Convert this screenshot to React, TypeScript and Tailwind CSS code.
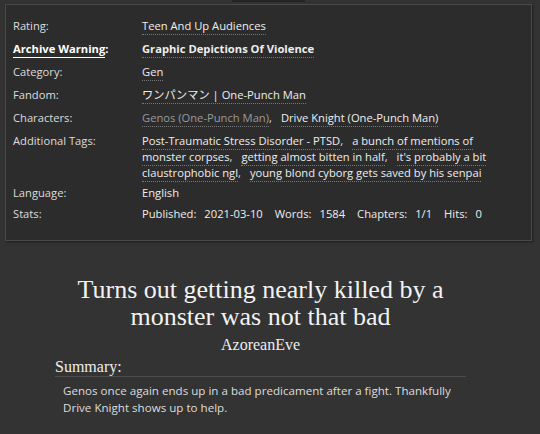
import type { ReactNode } from 'react';

const sans = "font-['Open_Sans','Noto_Sans_CJK_JP',sans-serif]";
const serif = "font-['Liberation_Serif',serif]";

function Tag({ children, muted = false }: { children: ReactNode; muted?: boolean }) {
  return (
    <span
      className={`border-b border-dotted border-[#777] pb-[1px] ${muted ? 'text-[#9a9a9a]' : 'text-[#eeeeee]'}`}
    >
      {children}
    </span>
  );
}

function Comma() {
  return <span className="mr-[9px] text-[#dddddd]">,</span>;
}

function Stat({ label, value }: { label: string; value: string }) {
  return (
    <span className="mr-[12px] inline-flex gap-[8px]">
      <span>{label}:</span>
      <span>{value}</span>
    </span>
  );
}

export default function App() {
  return (
    <div className={`min-h-[434px] w-[540px] bg-[#333333] ${sans} text-[11.2px] text-[#dddddd]`}>
      <div className="ml-[232px] h-[2px] w-[73px] bg-[#242424]" />

      {/* work meta */}
      <div className="ml-[5px] mt-[2px] w-[527px] border border-[#4a4a4a] bg-[#2c2c2c] pb-[18px] pl-[7px] pt-[13px] shadow-[1px_1px_2px_#1c1c1c]">
        <dl className="grid grid-cols-[129px_1fr] gap-y-[7px] leading-[16px]">
          <dt>Rating:</dt>
          <dd>
            <Tag>Teen And Up Audiences</Tag>
          </dd>

          <dt className="font-bold text-white">
            <span className="border-b border-white pb-[1px]">Archive Warning</span>:
          </dt>
          <dd className="font-bold">
            <Tag>Graphic Depictions Of Violence</Tag>
          </dd>

          <dt>Category:</dt>
          <dd>
            <Tag>Gen</Tag>
          </dd>

          <dt>Fandom:</dt>
          <dd>
            <Tag>ワンパンマン | One-Punch Man</Tag>
          </dd>

          <dt>Characters:</dt>
          <dd>
            <Tag muted>Genos (One-Punch Man)</Tag>
            <Comma />
            <Tag>Drive Knight (One-Punch Man)</Tag>
          </dd>

          <dt>Additional Tags:</dt>
          <dd>
            <Tag>Post-Traumatic Stress Disorder - PTSD</Tag>
            <Comma />
            <Tag>
              a bunch of mentions of
              <br />
              monster corpses
            </Tag>
            <Comma />
            <Tag>getting almost bitten in half</Tag>
            <Comma />
            <Tag>
              it's probably a bit
              <br />
              claustrophobic ngl
            </Tag>
            <Comma />
            <Tag>young blond cyborg gets saved by his senpai</Tag>
          </dd>

          <dt className="-mt-[3px]">Language:</dt>
          <dd className="-mt-[3px] text-[#eeeeee]">English</dd>

          <dt className="-mt-[2px]">Stats:</dt>
          <dd className="-mt-[2px] text-[#eeeeee]">
            <Stat label="Published" value="2021-03-10" />
            <Stat label="Words" value="1584" />
            <Stat label="Chapters" value="1/1" />
            <Stat label="Hits" value="0" />
          </dd>
        </dl>
      </div>

      {/* preface */}
      <div className="w-[521px] pt-[35px]">
        <h2 className={`${serif} text-center text-[26px] leading-[27px] text-[#f2f2f2]`}>
          Turns out getting nearly killed by a
          <br />
          monster was not that bad
        </h2>
        <h3 className={`${serif} mt-[5px] text-center text-[16px] leading-[20px] text-[#eeeeee]`}>
          AzoreanEve
        </h3>

        <div className="mx-[55px] mt-[3px]">
          <h3 className={`${serif} border-b border-[#4d4d4d] pb-[1px] text-[16px] leading-[17px] text-[#eeeeee]`}>
            Summary:
          </h3>
          <blockquote className="ml-[8px] mt-[5px] text-[11.6px] leading-[17px] text-[#dddddd]">
            <p>
              Genos once again ends up in a bad predicament after a fight. Thankfully
              <br />
              Drive Knight shows up to help.
            </p>
          </blockquote>
        </div>
      </div>
    </div>
  );
}
